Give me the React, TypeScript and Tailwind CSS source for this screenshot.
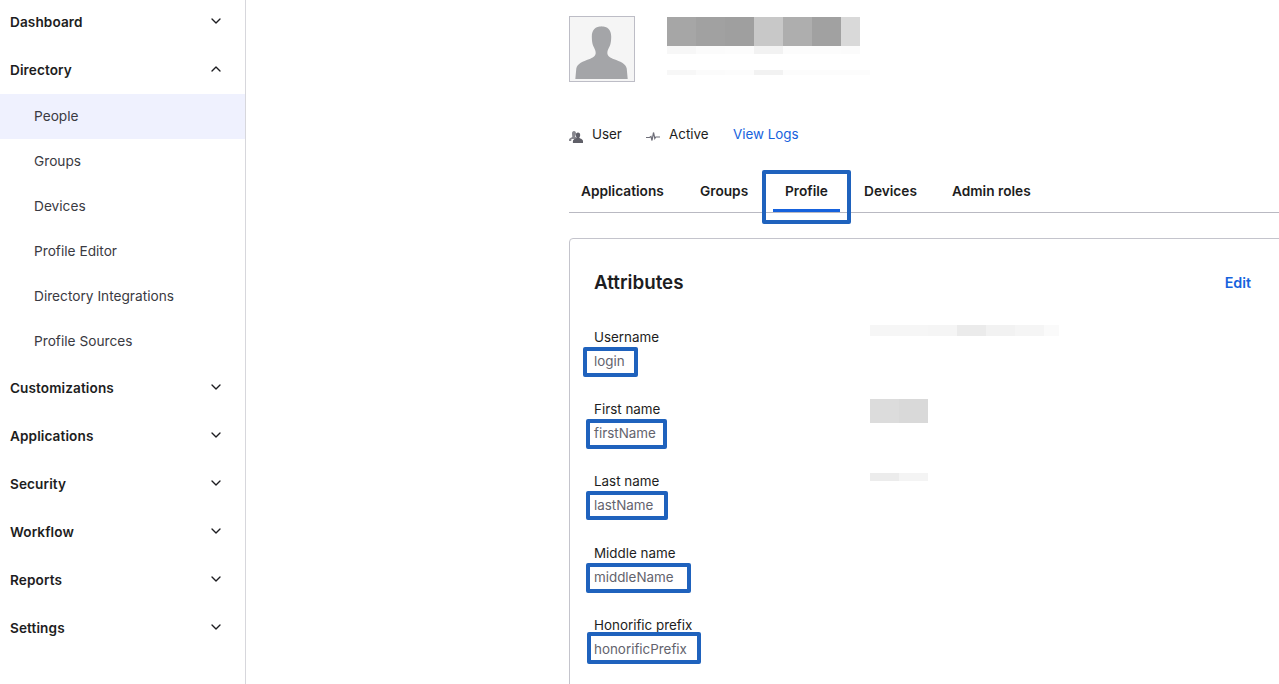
import React from 'react';
import { ChevronDown, ChevronUp } from 'lucide-react';

const font = 'font-["Inter","Liberation_Sans",sans-serif]';

const NavHeader = ({ label, open = false }: { label: string; open?: boolean }) => (
  <div className="flex h-12 items-center justify-between pl-2.5 pr-[21px]">
    <span className="text-[13.6px] font-semibold tracking-[0.1px] text-[#1d1d21]">{label}</span>
    {open ? (
      <ChevronUp className="h-4 w-4 -translate-y-px text-[#1d1d21]" strokeWidth={2} />
    ) : (
      <ChevronDown className="h-4 w-4 -translate-y-px text-[#1d1d21]" strokeWidth={2} />
    )}
  </div>
);

const subItems = ['People', 'Groups', 'Devices', 'Profile Editor', 'Directory Integrations', 'Profile Sources'];

const Sidebar = () => (
  <aside className="h-[684px] w-[246px] shrink-0 border-r border-[#d7d7dc]">
    <div className="-mt-0.5">
      <NavHeader label="Dashboard" />
      <NavHeader label="Directory" open />
      <ul>
        {subItems.map((item, i) => (
          <li
            key={item}
            className={`flex h-[45px] items-center pl-[34px] text-[13.7px] text-[#3a3a42] ${i === 0 ? 'bg-[#eff1fe]' : ''}`}
          >
            {item}
          </li>
        ))}
      </ul>
      {['Customizations', 'Applications', 'Security', 'Workflow', 'Reports', 'Settings'].map((label) => (
        <NavHeader key={label} label={label} />
      ))}
    </div>
  </aside>
);

const Avatar = () => (
  <div className="h-[66px] w-[66px] shrink-0 border border-[#bdbdc6] bg-[#f5f5f5]">
    <svg viewBox="0 0 66 66" className="h-full w-full">
      <path
        d="M32 9.500c7 0 10.500 4 10.500 10.500 0 4-.5 7.500-1.500 10-1.200 2.500-2.500 4.500-2.500 7 0 3 3 5 7 6.500 6 2.200 12 4.500 13 9.500l1 11H5.500l1-11c1-5 7-7.300 13-9.500 4-1.500 7-3.500 7-6.500 0-2.500-1.300-4.500-2.500-7-1-2.500-1.500-6-1.500-10 0-6.500 3.500-10.500 10.500-10.500z"
        fill="#a4a5a8"
      />
    </svg>
  </div>
);

const Cells = ({ colors, width, height, lastWidth }: { colors: string[]; width: number; height: string; lastWidth?: number }) => (
  <div className={`flex ${height}`}>
    {colors.map((c, i) => (
      <div key={i} style={{ backgroundColor: c, width: i === colors.length - 1 && lastWidth ? lastWidth : width }} />
    ))}
  </div>
);

const fields = [
  { label: 'Username', value: 'login', boxClass: 'left-[-11px] w-[55px] top-[22px] h-[30px]' },
  { label: 'First name', value: 'firstName', boxClass: 'left-[-8px] w-[81px] top-[22px] h-[30px]' },
  { label: 'Last name', value: 'lastName', boxClass: 'left-[-8px] w-[82px] top-[22px] h-[29px]' },
  { label: 'Middle name', value: 'middleName', boxClass: 'left-[-8px] w-[105px] top-[22px] h-[30px]' },
  { label: 'Honorific prefix', value: 'honorificPrefix', boxClass: 'left-[-7px] w-[114px] top-[19px] h-[32px]' },
];

const Tabs = () => (
  <div className="mt-[23px] flex h-[46px] items-start border-b border-[#b9b9c2] pl-3 text-[13.7px] font-semibold text-[#1d1d21]">
    <span className="mt-[14px] w-[119px]">Applications</span>
    <span className="mt-[14px] w-[85px]">Groups</span>
    <span className="relative mt-[14px] w-[79px]">
      Profile
      <span className="absolute left-[-12px] top-[28px] h-[3px] w-[67px] bg-[#1662dd]" />
      <span className="absolute left-[-23px] top-[-11px] h-[54px] w-[89px] rounded-[2px] border-4 border-[#1f62bd]" />
    </span>
    <span className="mt-[14px] w-[88px]">Devices</span>
    <span className="mt-[14px]">Admin roles</span>
  </div>
);

const Card = () => (
  <section className="mt-[25px] h-[500px] w-[760px] rounded-t-[4px] border border-[#c4c4cc] px-6">
    <div className="flex w-[657px] items-center justify-between pt-8">
      <h2 className="text-[18.8px] leading-6 font-semibold text-[#1d1d21]">Attributes</h2>
      <a className="text-[14.3px] font-semibold text-[#1662dd]">Edit</a>
    </div>
    <div className="mt-[30px]">
      {fields.map((f, i) => (
        <div key={f.label} className="flex h-[72px] items-start">
          <div className="relative w-[276px] text-[13.4px] leading-6">
            <div className="text-[#1d1d21]">{f.label}</div>
            <div className="text-[#63636d]">{f.value}</div>
            <span className={`absolute rounded-[2px] border-4 border-[#1f62bd] ${f.boxClass}`} />
          </div>
          {i === 0 && (
            <Cells colors={['#f6f6f6', '#f6f6f6', '#f5f5f5', '#ebebeb', '#f2f2f2', '#f5f5f5', '#fafafa']} width={29} lastWidth={15} height="h-[11px]" />
          )}
          {i === 1 && (
            <div className="mt-0.5">
              <Cells colors={['#dcdcdc', '#d9d9d9']} width={29} height="h-6" />
            </div>
          )}
          {i === 2 && (
            <div className="mt-1">
              <Cells colors={['#ececec', '#f4f4f4']} width={29} height="h-2" />
            </div>
          )}
        </div>
      ))}
    </div>
  </section>
);

const UserIcon = () => (
  <svg viewBox="0 0 16 16" className="h-4 w-4 text-[#5f5f68]" fill="currentColor">
    <path d="M6 3c1.400 0 2 1 2 2.500 0 1-.4 2-.9 2.700 0 .7 1 1.100 2 1.600l-1.500 1.200H3.500l-.3 2H1v-1.500c.2-1.300 2.500-1.800 3.300-2.800C4.200 7.500 4 6.500 4 5.500 4 4 4.700 3 6 3z" opacity=".75" />
    <path d="M10 4.500c1.500 0 2.200 1 2.200 2.400 0 1-.4 2-.9 2.700 0 .8 1.500 1 2.800 1.800.6.400.9 1 .9 1.600V15H4.900v-2c0-.6.300-1.200.9-1.600C7 10.600 8.700 10.400 8.700 9.600 8.200 8.900 7.800 7.900 7.800 6.900c0-1.400.7-2.400 2.200-2.400z" />
  </svg>
);

const PulseIcon = () => (
  <svg viewBox="0 0 16 16" className="h-4 w-4 text-[#6e6e78]" fill="none" stroke="currentColor" strokeWidth="1.200">
    <path d="M1 9.500h3.500l1.500-1 1 4 1.500-8 1.300 6 1-1.500H15" />
  </svg>
);

const Main = () => (
  <main className="min-w-0 flex-1 pl-[323px] pt-4">
    <div className="flex items-start gap-8">
      <Avatar />
      <div className="pt-px">
        <Cells colors={['#a6a6a6', '#a1a1a1', '#9f9f9f', '#c8c8c8', '#aeaeae', '#a1a1a1', '#d9d9d9']} width={29} lastWidth={19} height="h-[29px]" />
        <Cells colors={['#f7f7f7', '#fbfbfb', '#fcfcfc', '#f2f2f2', '#fcfcfc', '#fcfcfc', '#fbfbfb']} width={29} lastWidth={19} height="h-2" />
        <div className="h-4" />
        <Cells colors={['#f7f7f7', '#fbfbfb', '#fcfcfc', '#f2f2f2', '#fcfcfc', '#fcfcfc', '#fcfcfc']} width={29} height="h-[5px]" />
      </div>
    </div>
    <div className="mt-[42px] flex h-5 items-center text-[13.4px] text-[#1d1d21]">
      <span className="mt-1 -ml-px"><UserIcon /></span>
      <span className="ml-[8px] w-[53px]">User</span>
      <span className="mt-1"><PulseIcon /></span>
      <span className="ml-2 w-[64px]">Active</span>
      <a className="text-[#1662dd]">View Logs</a>
    </div>
    <Tabs />
    <Card />
  </main>
);

export default function App() {
  return (
    <div className={`flex h-[684px] w-[1279px] overflow-hidden bg-white ${font}`}>
      <Sidebar />
      <Main />
    </div>
  );
}
